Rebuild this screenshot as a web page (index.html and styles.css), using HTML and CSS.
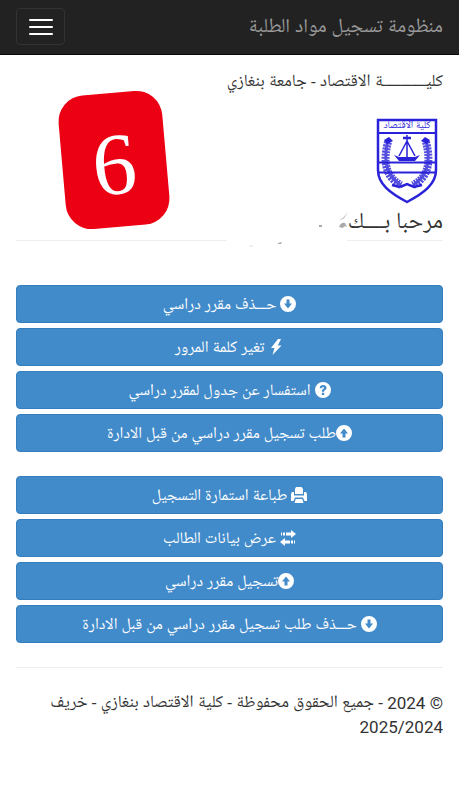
FILE: index.html
```html
<!DOCTYPE html>
<html lang="ar" dir="rtl">
<head>
    <meta charset="UTF-8">
    <meta name="viewport" content="width=device-width, initial-scale=1.0">
    <title>منظومة تسجيل مواد الطلبة</title>
    <link rel="stylesheet" href="styles.css">
</head>
<body>
    <svg class="sprite" aria-hidden="true">
        <symbol id="down" viewBox="0 0 16 16">
            <path fill-rule="evenodd" d="M8 0a8 8 0 1 0 0 16A8 8 0 0 0 8 0zM6.500 3.500h3v4H12l-4 5-4-5h2.500z"/>
        </symbol>
        <symbol id="up" viewBox="0 0 16 16">
            <path fill-rule="evenodd" d="M8 0a8 8 0 1 0 0 16A8 8 0 0 0 8 0zM8 3.500l4 5H9.500v4h-3v-4H4z"/>
        </symbol>
        <symbol id="flash" viewBox="0 0 16 16">
            <path d="M10 0L3 9h3.500L4.500 16 13.500 6.500H9.800L13 0z"/>
        </symbol>
        <symbol id="question" viewBox="0 0 16 16">
            <path fill-rule="evenodd" d="M8 0a8 8 0 1 0 0 16A8 8 0 0 0 8 0zM6.800 10.800h2.400V13H6.800zM4.800 6.200C4.800 4.200 6 3 8.100 3c2 0 3.400 1 3.400 2.800 0 1.400-.8 2-1.500 2.500-.6.400-.8.600-.8 1.500H6.800c0-1.600.4-2.200 1.300-2.800.6-.4.900-.6.900-1.100s-.3-.8-.9-.8c-.7 0-1 .4-1 1.100z"/>
        </symbol>
        <symbol id="print" viewBox="0 0 16 16">
            <path d="M5 0h5.500L12 2v5H4V2zM1 5h2v3.500h10V5h2l1 2v7h-2.500L12 10.500H4L2.500 14H0V7zM4.700 12h6.600l1.200 4h-9z"/>
        </symbol>
        <symbol id="transfer" viewBox="0 0 16 16">
            <path d="M11 0l5 4-5 4V5.500H6v-3h5zM1 2.500h1v3H1zM3 2.500h2v3H3zM5 8L0 12l5 4v-2.500h5v-3H5zM11 10.500h2v3h-2zM14 10.500h1v3h-1z"/>
        </symbol>
    </svg>

    <nav class="navbar">
        <a class="brand" href="#">منظومة تسجيل مواد الطلبة</a>
        <button class="toggle" type="button" aria-label="القائمة">
            <span class="bar"></span>
            <span class="bar"></span>
            <span class="bar"></span>
        </button>
    </nav>

    <main class="container">
        <header class="top">
            <div class="intro">
                <p class="college">كليــــــــــــة الاقتصاد - جامعة بنغازي</p>
                <svg class="logo" viewBox="0 0 62 86" role="img" aria-label="كلية الاقتصاد">
                    <g fill="none" stroke="#2a22d8" stroke-width="2">
                        <path d="M2 2h58v50c0 14-12 23-29 32C14 75 2 66 2 52z" stroke-width="2.500"/>
                        <path d="M2 15h58M2 44.500h58M2 54.500h58"/>
                        <path d="M31 17v25M31 23l-8 15M31 23l8 15" stroke-width="1.500"/>
                        <path d="M27 20h8M24 69l7-3 7 3 8-2M24 69l-8-2" stroke-width="2.500"/>
                    </g>
                    <g fill="none" stroke="#2a22d8" opacity=".8">
                        <path d="M12 24c-5 19-3 35 13 43M50 24c5 19 3 35-13 43" stroke-width="8" stroke-dasharray="2 1"/>
                        <path d="M12 22c-5 20-2 36 13 45M50 22c5 20 2 36-13 45" stroke-width="3"/>
                    </g>
                    <path d="M18 37l5 2h16l5-2-5 6H23z" fill="#2a22d8"/>
                    <path d="M8 22l5-3 4 4-6 3zM54 22l-5-3-4 4 6 3z" fill="#2a22d8"/>
                    <text class="logo-text" x="31" y="11" text-anchor="middle">كلية الاقتصاد</text>
                </svg>
                <h1 class="welcome">مرحبا بــــك</h1>
            </div>
            <div class="card">6</div>
        </header>
        <!-- rule with the student's name wiped out -->
        <div class="name-line">
            <svg class="wipe" viewBox="0 0 120 48">
                <rect y="26" width="120" height="10" fill="#fff"/>
                <g fill="#aaa">
                    <path d="M112 18q2-5 6-4l2 4q-3-2-4 1z"/>
                    <path d="M112 11q6-2 8-8-1 7-8 8z"/>
                    <path d="M92 16h3v2h-3zM51 34l4-1-1 2h-3z"/>
                    <path d="M22 37l4-1-2 2z" fill="#ddd"/>
                </g>
            </svg>
        </div>

        <section class="menu">
            <button class="btn" type="button"><svg class="icon"><use href="#down"/></svg> حـــذف مقرر دراسي</button>
            <button class="btn" type="button"><svg class="icon"><use href="#flash"/></svg> تغير كلمة المرور</button>
            <button class="btn" type="button"><svg class="icon"><use href="#question"/></svg> استفسار عن جدول لمقرر دراسي</button>
            <button class="btn" type="button"><svg class="icon"><use href="#up"/></svg>طلب تسجيل مقرر دراسي من قبل الادارة</button>
        </section>
        <section class="menu">
            <button class="btn" type="button"><svg class="icon"><use href="#print"/></svg> طباعة استمارة التسجيل</button>
            <button class="btn" type="button"><svg class="icon"><use href="#transfer"/></svg> عرض بيانات الطالب</button>
            <button class="btn" type="button"><svg class="icon"><use href="#up"/></svg>تسجيل مقرر دراسي</button>
            <button class="btn" type="button"><svg class="icon"><use href="#down"/></svg> حـــذف طلب تسجيل مقرر دراسي من قبل الادارة</button>
        </section>

        <footer class="footer">
            <p>© 2024 - جميع الحقوق محفوظة - كلية الاقتصاد بنغازي - خريف 2025/2024</p>
        </footer>
    </main>
</body>
</html>
```
FILE: styles.css
```css
*{
    box-sizing: border-box;
}
body{
    margin: 0;
    background: #fff;
    color: #333;
    font-family: Roboto, "Noto Naskh Arabic UI", "Noto Sans Arabic", "DejaVu Sans", sans-serif;
    font-size: 17px;
    line-height: 24px;
}
p, h1{
    margin: 0;
}
.sprite{
    display: none;
}
.navbar{
    display: flex;
    justify-content: space-between;
    align-items: flex-start;
    height: 55px;
    padding: 8px 16px;
    background: #222;
    border-bottom: 1px solid #080808;
}
.brand{
    color: #999;
    font-size: 20px;
    line-height: 40px;
    text-decoration: none;
}
.toggle{
    display: flex;
    flex-direction: column;
    justify-content: center;
    align-items: center;
    gap: 5px;
    width: 49px;
    height: 37px;
    padding: 0;
    background: transparent;
    border: 1px solid #333;
    border-radius: 4px;
    cursor: pointer;
}
.bar{
    width: 24px;
    height: 2px;
    border-radius: 1px;
    background: #fff;
}
.container{
    padding: 0 16px;
}
.top{
    display: flex;
    justify-content: space-between;
    align-items: flex-start;
    height: 185px;
}
.intro{
    display: flex;
    flex-direction: column;
    align-items: flex-start;
    padding-top: 15px;
    white-space: nowrap;
}
.college{
    font-size: 17px;
}
.logo{
    width: 62px;
    height: 86px;
    margin: 24px 5px 4px;
}
.logo-text{
    fill: #2a22d8;
    font-size: 10px;
}
.welcome{
    font-size: 23px;
    font-weight: 400;
    line-height: 32px;
}
.card{
    display: flex;
    justify-content: center;
    align-items: center;
    width: 104px;
    height: 134px;
    margin-top: 38px;
    margin-left: 46px;
    padding-top: 10px;
    border-radius: 26px;
    background: #ec0013;
    color: #fff;
    font-family: "Liberation Serif", serif;
    font-size: 88px;
    transform: rotate(-5deg);
}
.name-line{
    position: relative;
    border-top: 1px solid #eee;
    margin-bottom: 44px;
}
.wipe{
    position: absolute;
    right: 96px;
    top: -32px;
    width: 120px;
    height: 48px;
}
.menu{
    display: flex;
    flex-direction: column;
    gap: 5px;
    margin-bottom: 24px;
}
.btn{
    height: 38px;
    padding: 3px 12px 0;
    background: #428bca;
    border: 1px solid #357ebd;
    border-radius: 4px;
    color: #fff;
    font-family: inherit;
    font-size: 16px;
    line-height: 24px;
    cursor: pointer;
}
.icon{
    width: 16px;
    height: 16px;
    fill: #fff;
    vertical-align: -1px;
}
.footer{
    border-top: 1px solid #eee;
    padding: 23px 0;
}
```
